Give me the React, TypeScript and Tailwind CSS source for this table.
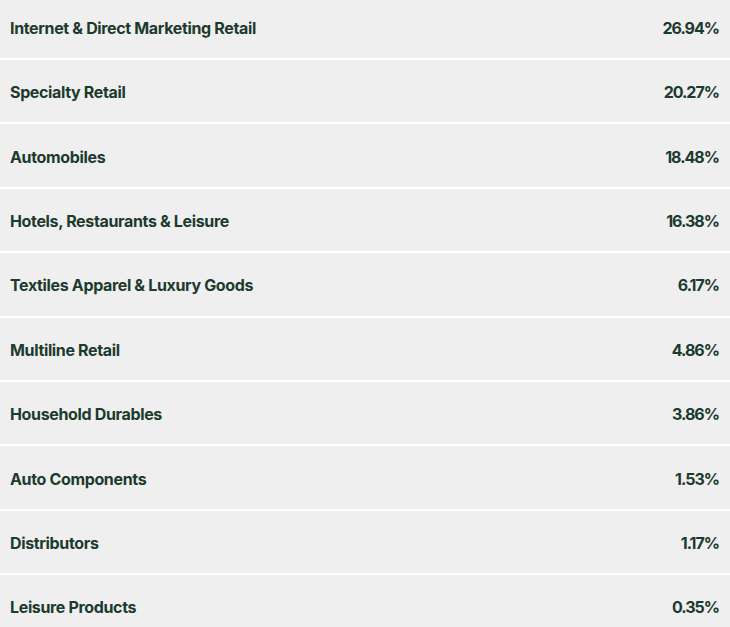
import React from "react";

const rows: [string, string][] = [
  ["Internet & Direct Marketing Retail", "26.94%"],
  ["Specialty Retail", "20.27%"],
  ["Automobiles", "18.48%"],
  ["Hotels, Restaurants & Leisure", "16.38%"],
  ["Textiles Apparel & Luxury Goods", "6.17%"],
  ["Multiline Retail", "4.86%"],
  ["Household Durables", "3.86%"],
  ["Auto Components", "1.53%"],
  ["Distributors", "1.17%"],
  ["Leisure Products", "0.35%"],
];

export default function App() {
  return (
    <div className="w-[730px] h-[627px] overflow-hidden bg-white" style={{ fontFamily: "Inter, 'Noto Sans', sans-serif" }}>
      <div className="-mt-[4.4px] flex flex-col">
        {rows.map(([name, pct]) => (
          <div
            key={name}
            className="h-[64.4px] shrink-0 flex items-center justify-between bg-[#efefef] border-b-2 border-white pl-[10px] pr-[11px] pt-[2px] text-[16px] leading-none font-bold tracking-[-0.35px] text-[#1c3a2e]"
          >
            <span>{name}</span>
            <span className="tracking-[-1px]">{pct}</span>
          </div>
        ))}
      </div>
    </div>
  );
}
